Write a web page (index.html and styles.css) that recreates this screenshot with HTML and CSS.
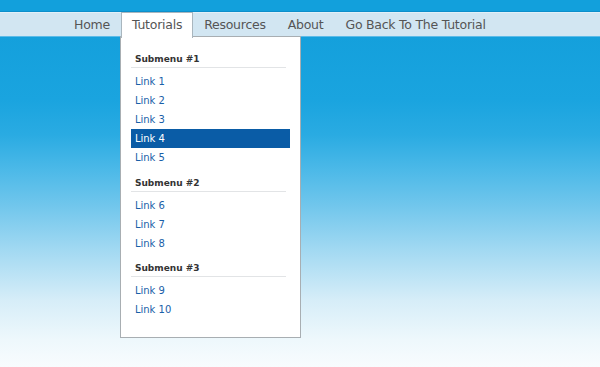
FILE: index.html
```html
<!DOCTYPE html>
<html>
<head>
<meta charset="utf-8">
<link rel="stylesheet" href="styles.css">
</head>
<body>
<div class="top"></div>
<nav class="nav">
  <ul class="menu">
    <li class="item"><a href="#">Home</a></li>
    <li class="item active"><a href="#">Tutorials</a>
      <div class="drop">
        <div class="group">
          <h3>Submenu #1</h3>
          <a class="link" href="#">Link 1</a>
          <a class="link" href="#">Link 2</a>
          <a class="link" href="#">Link 3</a>
          <a class="link hover" href="#">Link 4</a>
          <a class="link" href="#">Link 5</a>
        </div>
        <div class="group">
          <h3>Submenu #2</h3>
          <a class="link" href="#">Link 6</a>
          <a class="link" href="#">Link 7</a>
          <a class="link" href="#">Link 8</a>
        </div>
        <div class="group">
          <h3>Submenu #3</h3>
          <a class="link" href="#">Link 9</a>
          <a class="link" href="#">Link 10</a>
        </div>
      </div>
    </li>
    <li class="item"><a href="#">Resources</a></li>
    <li class="item"><a href="#">About</a></li>
    <li class="item"><a href="#">Go Back To The Tutorial</a></li>
  </ul>
</nav>
</body>
</html>
```
FILE: styles.css
```css
html, body { margin: 0; padding: 0; }
body {
  width: 600px;
  height: 367px;
  overflow: hidden;
  font-family: "DejaVu Sans", Verdana, sans-serif;
  background: linear-gradient(to bottom, #12a0dc 0px, #14a0dc 36px, #1aa4df 100px, #2aabe2 135px, #4cb9e8 170px, #70c6ec 205px, #a2d9f2 250px, #d6edf8 300px, #eef8fc 340px, #f8fcfe 367px);
}
.top {
  height: 11px;
  background: #12a0dc;
  border-bottom: 1px solid #0d8fcb;
}
.nav {
  height: 23px;
  background: #d2e6f2;
  border-top: 1px solid #e2f0f8;
  border-bottom: 1px solid #5cbbe8;
}
.menu {
  list-style: none;
  margin: 0;
  padding: 0 0 0 63px;
  display: flex;
  height: 23px;
}
.item {
  position: relative;
  height: 23px;
}
.item > a {
  display: block;
  padding: 0 10px;
  line-height: 23px;
  font-size: 12.5px;
  color: #555;
  text-decoration: none;
  letter-spacing: -0.25px;
  border: 1px solid transparent;
  border-bottom: 0;
  margin-top: -1px;
  height: 24px;
}
.item.active > a {
  background: #fff;
  border-color: #a9b6be;
  position: relative;
  z-index: 2;
  height: 25px;
}
.drop {
  position: absolute;
  left: -1px;
  top: 23px;
  width: 159px;
  padding: 11px 10px 18px 10px;
  background: #fff;
  border: 1px solid #a8aeb2;
  z-index: 1;
}
.group h3 {
  margin: 6px 4px 4px 0;
  padding: 0 0 3px 4px;
  font-size: 9px;
  font-weight: bold;
  color: #333;
  border-bottom: 1px solid #e2e4e6;
}
.group { margin-bottom: 11px; }
.group + .group { margin-bottom: 10px; }
.group:last-child { margin-bottom: 0; }
.link {
  display: block;
  height: 19px;
  line-height: 19px;
  padding-left: 4px;
  font-size: 10px;
  color: #1a60a8;
  text-decoration: none;
}
.link.hover {
  background: #0a5ca6;
  color: #fff;
}
```
